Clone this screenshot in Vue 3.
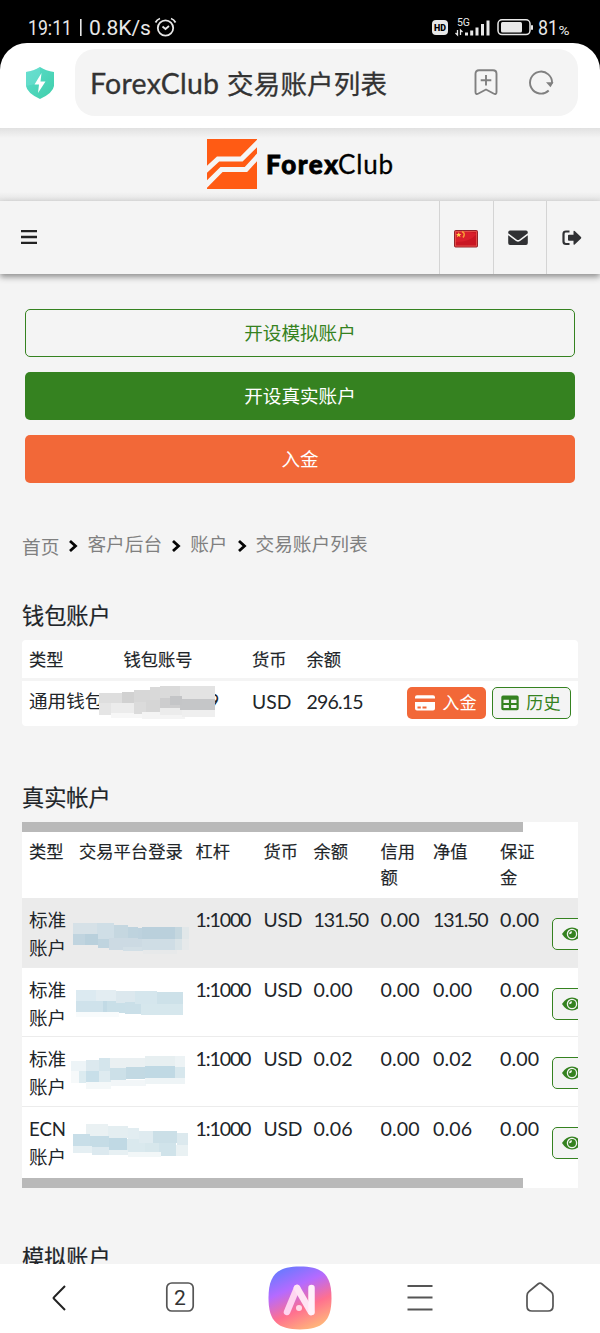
<script setup>
const actions = [
  { label: '开设模拟账户', kind: 'outline' },
  { label: '开设真实账户', kind: 'green' },
  { label: '入金', kind: 'orange' },
]
const crumbs = ['首页', '客户后台', '账户', '交易账户列表']
const heads = ['类型', '交易平台登录', '杠杆', '货币', '余额', '信用额', '净值', '保证金']
const walletMask = [
  [297, 158, 68, 32, '#dedede'], [365, 155, 38, 34, '#d1d1d1'], [297, 188, 34, 37, '#e5e5e5'],
  [331, 188, 72, 34, '#ececec'], [331, 218, 100, 14, '#f7f7f7'], [400, 150, 50, 38, '#d7d7d7'],
  [400, 186, 36, 34, '#dbdbdb'], [436, 178, 50, 38, '#d6d6d6'], [425, 215, 130, 22, '#f4f4f4'],
  [450, 141, 28, 38, '#d9d9d9'], [478, 137, 66, 38, '#dadada'], [478, 173, 66, 32, '#cdcdce'],
  [478, 203, 70, 22, '#ececec'], [540, 138, 105, 41, '#e3e3e3'], [540, 177, 105, 33, '#c5c6c8'],
  [545, 209, 98, 22, '#efefef'], [510, 168, 35, 26, '#c4c5c7'],
]
const rows = [
  {
    cells: ['标准账户', '', '1:1000', 'USD', '131.50', '0.00', '131.50', '0.00'],
    mask: [
      [220, 72, 72, 34, '#d6e1e7'], [292, 72, 50, 52, '#cfdee6'], [220, 106, 34, 32, '#c0d4df'],
      [254, 106, 40, 32, '#b9d0dc'], [294, 120, 34, 26, '#bfd4df'], [342, 79, 42, 39, '#c5d7e0'],
      [384, 85, 30, 35, '#bed3de'], [326, 116, 100, 36, '#ccdae3'], [414, 87, 12, 34, '#bdd2de'],
      [426, 85, 98, 36, '#bad0dc'], [524, 85, 22, 36, '#c5d7df'], [546, 85, 20, 36, '#e1e7e9'],
      [370, 145, 60, 12, '#d2dfe6'], [426, 121, 98, 31, '#cfdde5'], [524, 121, 22, 31, '#d9e3e7'],
      [546, 121, 20, 31, '#e6e9ea'], [430, 152, 100, 12, '#e7e9ea'],
    ],
  },
  {
    cells: ['标准账户', '', '1:1000', 'USD', '0.00', '0.00', '0.00', '0.00'],
    mask: [
      [228, 63, 60, 33, '#dceaf1'], [288, 64, 60, 33, '#e3edf2'], [228, 96, 80, 33, '#cfe2eb'],
      [308, 96, 14, 35, '#c2dae5'], [322, 96, 52, 36, '#c9dfe8'], [348, 66, 60, 35, '#dce8ee'],
      [374, 100, 50, 34, '#cadfe8'], [404, 67, 66, 37, '#d5e6ed'], [424, 104, 126, 34, '#d6e7ed'],
      [470, 70, 80, 34, '#cde1e9'], [228, 130, 130, 15, '#f8fbfc'],
    ],
  },
  {
    cells: ['标准账户', '', '1:1000', 'USD', '0.02', '0.00', '0.02', '0.00'],
    mask: [
      [214, 69, 44, 32, '#edf4f7'], [258, 65, 38, 35, '#dce9ef'], [296, 61, 38, 39, '#d4e5ec'],
      [236, 98, 22, 36, '#dcebf0'], [258, 98, 40, 35, '#c8dfe9'], [298, 98, 34, 33, '#deebf0'],
      [330, 60, 110, 34, '#eaf0f2'], [330, 90, 48, 36, '#cce0e8'], [378, 88, 60, 36, '#c2d9e3'],
      [436, 54, 88, 33, '#e7eff1'], [436, 84, 88, 36, '#c0d9e4'], [524, 53, 30, 34, '#edf3f5'],
      [524, 86, 30, 33, '#d7e7ed'], [258, 133, 76, 20, '#f4f8f9'], [332, 125, 105, 20, '#f2f6f8'],
      [436, 119, 118, 20, '#eef4f6'], [214, 100, 22, 34, '#f6f9fa'],
    ],
  },
  {
    cells: ['ECN账户', '', '1:1000', 'USD', '0.06', '0.00', '0.06', '0.00'],
    mask: [
      [258, 49, 66, 36, '#eaf1f3'], [324, 55, 60, 36, '#e4eef1'], [384, 60, 34, 36, '#e2edf1'],
      [220, 79, 50, 34, '#c8dee8'], [270, 84, 56, 34, '#c5dce6'], [326, 90, 54, 36, '#c0d9e4'],
      [380, 94, 54, 38, '#dae9ee'], [418, 68, 42, 38, '#dfebf0'], [460, 68, 70, 36, '#cbdfe7'],
      [530, 75, 34, 36, '#dce9ee'], [434, 104, 44, 33, '#d7e7ec'], [478, 104, 50, 39, '#d0e3ea'],
      [528, 110, 36, 35, '#e9f1f3'], [220, 113, 56, 22, '#e5eff3'], [276, 118, 52, 24, '#dce9ef'],
      [328, 126, 56, 14, '#e7f0f3'], [384, 132, 100, 14, '#f2f7f8'],
    ],
  },
]
</script>

<template>
  <div class="phone">
    <header class="status">
      <svg width="600" height="43" viewBox="0 0 600 43">
        <g fill="#e8e8e8">
          <text x="28" y="35" font-size="20.5" textLength="44" lengthAdjust="spacingAndGlyphs">19:11</text>
          <rect x="80" y="19" width="1.6" height="17" />
          <text x="89" y="35" font-size="20.5" textLength="62" lengthAdjust="spacingAndGlyphs">0.8K/s</text>
          <rect x="432" y="20" width="16" height="15" rx="4" />
          <text x="434" y="31" font-size="8.5" font-weight="900" fill="#000" textLength="12" lengthAdjust="spacingAndGlyphs">HD</text>
          <text x="457" y="26" font-size="10.5" textLength="13">5G</text>
          <path d="M465 35.500v-3h3v3zM470.200 35.500v-5h3v5zM475.500 35.500v-8h3v8zM481 35.500v-11.500h3v11.500zM486.500 35.500v-15h3v15z" />
          <path d="M457.500 30v5l-2-2M460.500 35v-5l2 2" fill="none" stroke="#e8e8e8" stroke-width="1.300" />
          <rect x="501" y="22" width="21" height="10.500" rx="1.500" />
          <rect x="531" y="25" width="2" height="5" rx="1" />
          <text x="538" y="35" font-size="20.500" textLength="20" lengthAdjust="spacingAndGlyphs">81</text>
          <text x="558.500" y="35" font-size="13" textLength="11" lengthAdjust="spacingAndGlyphs">%</text>
        </g>
        <g fill="none" stroke="#e8e8e8" stroke-width="1.800">
          <circle cx="165.500" cy="28" r="7.700" />
          <path d="M162.500 26.500l3 2.500 3.500-3M155.500 22.500q1.500-3 4.500-4M175.500 22.500q-1.500-3-4.500-4" />
          <rect x="498" y="19.800" width="32" height="14.800" rx="4" stroke-width="1.500" />
        </g>
      </svg>
    </header>

    <div class="browser-wrap">
      <div class="browser">
        <svg class="shield" width="30" height="34" viewBox="0 0 30 34">
          <defs>
            <linearGradient id="mint" x1="0" y1="0" x2="1" y2="1">
              <stop offset="0" stop-color="#5bdccb" /><stop offset="1" stop-color="#40cfaa" />
            </linearGradient>
          </defs>
          <path d="M15 1 Q21 5 29 6V20Q28 27 15 33Q2 27 1 20V6Q9 5 15 1Z" fill="url(#mint)" />
          <path d="M15 1Q9 5 1 6V20L15 17Z" fill="#78e3d6" opacity=".45" />
          <path d="M16.500 7L9.500 18.500H14L13 27L20.500 15.500H15.500Z" fill="#fff" />
        </svg>
        <div class="address">
          <svg class="title" width="310" height="44" viewBox="0 0 310 44">
            <text x="0" y="32.500" font-size="28.500" textLength="129">ForexClub</text>
            <text x="137" y="32.500" font-size="26.500" textLength="160">交易账户列表</text>
          </svg>
          <svg class="mark" width="24" height="27" viewBox="0 0 24 27">
            <path d="M5 1.200H19Q22.500 1.200 22.500 4.700V23Q22.500 26 19.500 24.500L12 20.500L4.500 24.500Q1.500 26 1.500 23V4.700Q1.500 1.200 5 1.200ZM12 6V16.500M6.700 11.200H17.300" />
          </svg>
          <svg class="reload" width="26" height="26" viewBox="0 0 26 26">
            <path d="M20.700 20.500A11 11 0 1 1 24 13.500" /><path d="M18 12.200H25.500L22.500 17.200Z" class="tip" />
          </svg>
        </div>
      </div>
    </div>

    <div class="brand">
      <svg width="190" height="52" viewBox="0 0 190 52">
        <defs><clipPath id="tile"><rect x="2" y="1" width="50" height="50" /></clipPath></defs>
        <g clip-path="url(#tile)">
          <rect x="2" y="1" width="50" height="50" fill="#ff5b14" />
          <path d="M-1 34L13 21H36.500L56 1.500M-1 49L16.500 31.500H41L56 15" fill="none" stroke="#f5f5f5" stroke-width="5.200" />
        </g>
        <text x="61" y="36" font-size="26" font-weight="900" textLength="72" stroke="#000" stroke-width=".8">Forex</text>
        <text x="133" y="36" font-size="26" textLength="55" stroke="#000" stroke-width=".3">Club</text>
      </svg>
    </div>

    <nav class="toolbar">
      <svg class="burger" width="18" height="16" viewBox="0 0 18 16"><path d="M1 2.200H17M1 8H17M1 13.800H17" /></svg>
      <div class="tool">
        <svg width="24" height="18" viewBox="0 0 24 18">
          <rect x=".5" y=".5" width="23" height="16.500" rx="1" fill="#d91f2b" stroke="#91252b" />
          <path d="M12 1h11v15H1V12Q14 13 23 4" fill="#b90d1b" opacity=".5" />
          <path d="M1.500 1.500H22.500V16H1.500Z" fill="none" stroke="#e75a51" stroke-width=".8" />
          <path d="M4.700 2.200l.8 1.800h2l-1.600 1.300.6 2-1.800-1.200-1.800 1.200.6-2L2 4h2z" fill="#ffd04b" />
          <path d="M8 1.500q4 2 1 6" fill="none" stroke="#f79a33" stroke-width="1.500" />
        </svg>
      </div>
      <div class="tool">
        <svg width="20" height="16" viewBox="0 0 20 16">
          <path d="M2 .5H18Q19.800.5 19.800 2.500V3.300L11.500 9.500Q10 10.600 8.500 9.500L.2 3.300V2.500Q.2.500 2 .5ZM.2 5.200L8 11Q10 12.300 12 11L19.800 5.200V13Q19.800 15 18 15H2Q.2 15 .2 13Z" fill="#303134" />
        </svg>
      </div>
      <div class="tool">
        <svg width="20" height="16" viewBox="0 0 20 16">
          <path d="M7.500 1.500H4Q1.500 1.500 1.500 4V11.500Q1.500 14 4 14H7.500" fill="none" stroke="#303134" stroke-width="2.200" />
          <path d="M6 5.500Q6 4.700 7 4.700H11.500V1.500Q11.500.3 12.700 1.100L19 7Q19.600 7.700 19 8.500L12.700 14.500Q11.500 15.300 11.500 14V10.800H7Q6 10.800 6 10Z" fill="#303134" />
        </svg>
      </div>
    </nav>

    <main>
      <div class="actions">
        <button v-for="a in actions" :key="a.label" :class="a.kind">{{ a.label }}</button>
      </div>

      <div class="crumbs">
        <template v-for="(c, i) in crumbs" :key="c">
          <svg v-if="i" width="10" height="14" viewBox="0 0 10 14"><path d="M2 2L7.500 7L2 12" /></svg>
          <span>{{ c }}</span>
        </template>
      </div>

      <h2>钱包账户</h2>
      <section class="wallet">
        <div class="wgrid whead"><b>类型</b><b>钱包账号</b><b>货币</b><b>余额</b></div>
        <div class="wgrid wrow">
          <span>通用钱包</span><span class="number-end">9</span><span class="usd">USD</span><span class="sum">296.15</span>
          <div class="buttons">
            <button class="pay">
              <svg width="20" height="16" viewBox="0 0 20 16">
                <path d="M2 .3H18Q20 .3 20 2.300V3.500H0V2.300Q0 .3 2 .3ZM0 7H20V13.500Q20 15.500 18 15.500H2Q0 15.500 0 13.500Z" fill="#fff" />
                <path d="M2.500 12.500H5.800M7.500 12.500H11.500" stroke="#f26838" stroke-width="1.800" />
              </svg>
              入金
            </button>
            <button class="history">
              <svg width="18" height="16" viewBox="0 0 18 16">
                <path d="M2 .5H16Q17.700.5 17.700 2.200V13.500Q17.700 15.200 16 15.200H2Q.3 15.200.3 13.500V2.200Q.3.500 2 .5ZM2.500 4.800V8H7.900V4.800ZM10.100 4.800V8H15.500V4.800ZM2.500 10V13H7.900V10ZM10.100 10V13H15.500V10Z" fill="#358220" fill-rule="evenodd" />
              </svg>
              历史
            </button>
          </div>
          <svg class="wmask" width="130" height="40" viewBox="290 125 390 120" shape-rendering="crispEdges">
            <rect v-for="(m, i) in walletMask" :key="i" :x="m[0]" :y="m[1]" :width="m[2]" :height="m[3]" :fill="m[4]" />
          </svg>
        </div>
      </section>

      <h2 class="second">真实帐户</h2>
      <section class="live">
        <div class="bar"></div>
        <div class="lgrid lhead"><b v-for="h in heads" :key="h">{{ h }}</b></div>
        <div v-for="(r, i) in rows" :key="i" class="lgrid lrow">
          <span v-for="(c, j) in r.cells" :key="j" :class="['c' + j, { long: c.length === 6 }]">{{ c }}</span>
          <button class="view">
            <svg width="20" height="14" viewBox="0 0 20 14">
              <path d="M0 7Q4 .5 10 .5T20 7Q16 13.500 10 13.500T0 7Z" fill="#358220" />
              <circle cx="10" cy="7" r="4.600" fill="#358220" stroke="#f4f4f4" stroke-width="1.300" />
              <path d="M7.200 7.200A2.800 2.800 0 0 1 10 4.200Q10 7 7.200 7.200Z" fill="#f4f4f4" />
            </svg>
          </button>
          <svg class="lmask" width="120" height="42" viewBox="210 45 360 126" shape-rendering="crispEdges">
            <rect v-for="(m, k) in r.mask" :key="k" :x="m[0]" :y="m[1]" :width="m[2]" :height="m[3]" :fill="m[4]" />
          </svg>
        </div>
        <div class="bar"></div>
      </section>

      <h2 class="third">模拟账户</h2>
    </main>

    <footer>
      <div><svg width="30" height="36" viewBox="0 0 30 36"><path d="M20 6L9 17.200Q8 18 9 18.800L20 30" stroke="#222" stroke-width="2" /></svg></div>
      <div>
        <svg width="30" height="36" viewBox="0 0 30 36">
          <rect x="1.800" y="3" width="26.400" height="28" rx="5" />
          <text x="15" y="24.500" font-size="21" text-anchor="middle">2</text>
        </svg>
      </div>
      <div>
        <svg width="64" height="64" viewBox="0 0 64 64">
          <defs>
            <linearGradient id="ai" x1=".2" y1="0" x2=".65" y2="1">
              <stop offset="0" stop-color="#637bff" /><stop offset=".35" stop-color="#b56aff" />
              <stop offset=".68" stop-color="#ff708f" /><stop offset="1" stop-color="#ffb47b" />
            </linearGradient>
          </defs>
          <path d="M32 .5C54 .5 63.500 8 63.500 32S54 63 32 63.500C10 63 .5 56 .5 32S10 .5 32 .5Z" fill="url(#ai)" stroke="none" />
          <path d="M19 46L29 22" stroke="#ffd5f0" stroke-width="6.500" stroke-linecap="round" />
          <path d="M29 22L43 46" stroke="#ffe4f4" stroke-width="6.500" stroke-linecap="round" />
          <path d="M43.500 22V46" stroke="#fff1fa" stroke-width="6.500" stroke-linecap="round" />
          <circle cx="31" cy="42" r="3" fill="#ffd9e8" stroke="none" />
        </svg>
      </div>
      <div><svg width="30" height="36" viewBox="0 0 30 36"><path d="M2.500 6H27.500M2.500 17.500H27.500M2.500 29.500H27.500" stroke-width="1.900" /></svg></div>
      <div><svg width="30" height="36" viewBox="0 0 30 36"><path d="M13 4Q15 2.300 17 4L26 11.500Q28 13 28 16V26Q28 31 23 31H7Q2 31 2 26V16Q2 13 4 11.500Z" /></svg></div>
    </footer>
  </div>
</template>

<style>
body { background: #f4f4f4; }
</style>

<style scoped>
.phone {
  width: 600px; height: 1333px; overflow: hidden; display: flex; flex-direction: column;
  background: #f4f4f4; color: #212529; font-family: Lato, "Noto Sans CJK SC", sans-serif;
}
.phone * { box-sizing: border-box; }
svg { display: block; flex: none; }
button { font: inherit; margin: 0; padding: 0; border: 0; }
.status { height: 43px; flex: none; background: #000; font-family: Roboto, sans-serif; }
.browser-wrap { height: 85px; flex: none; background: #000; }
.browser { height: 85px; border-radius: 27px 27px 0 0; background: #fff; display: flex; align-items: flex-start; }
.shield { margin: 23px 0 0 25px; }
.address { width: 503px; height: 67px; margin: 6px 0 0 20px; background: #f4f4f4; border-radius: 20px; display: flex; align-items: center; }
.title { margin-left: 15px; fill: #333; stroke: #333; stroke-width: .3px; font-family: Lato, "Noto Sans CJK SC", sans-serif; }
.mark { margin-left: 74px; }
.reload { margin-left: 30px; }
.mark path, .reload path { fill: none; stroke: #808080; stroke-width: 1.900; }
.reload .tip { fill: #808080; stroke: none; }
.brand { height: 73px; flex: none; display: flex; justify-content: center; padding-top: 10px; background: linear-gradient(#e1e1e1, #f4f4f4 10px, #f4f4f4 64px, #e3e3e3); }
.brand svg { font-family: Lato, sans-serif; }
.toolbar { height: 73px; flex: none; display: flex; align-items: center; box-shadow: 0 3px 6px #8f8f8f; }
.burger { margin: 0 auto 1px 20px; }
.burger path { stroke: #222; stroke-width: 2.300; }
.tool { width: 53.700px; height: 73px; display: flex; align-items: center; justify-content: center; border-left: 1px solid #d4d4d4; }
.tool:nth-child(2) svg { margin-top: 3px; }
.tool:nth-child(n + 3) svg { margin-right: 4px; }
main { flex: 1; min-height: 0; overflow: hidden; padding: 35px 22px 0; }
.actions { display: grid; gap: 15px; padding: 0 3px; }
.actions button { height: 48px; border-radius: 5px; font-size: 18.600px; color: #fff; padding-bottom: 4px; }
.actions .outline { color: #358220; background: transparent; border: 1px solid #358220; }
.actions .green { background: #358220; }
.actions .orange { background: #f26838; }
.crumbs { height: 28px; margin-top: 47px; display: flex; align-items: center; font-size: 18.700px; color: #808080; }
.crumbs svg { margin: 4px 9px 0 9px; }
.crumbs path { fill: none; stroke: #050505; stroke-width: 2.800; }
.crumbs span { margin-top: -3px; }
.crumbs span:first-child { margin-top: 3px; }
h2 { margin: 43px 0 0; height: 30px; font-size: 22.200px; line-height: 30px; font-weight: 400; -webkit-text-stroke: .2px #212529; }
.wallet { margin-top: 9px; height: 86px; background: #fff; border-radius: 4px; }
.wgrid { display: grid; grid-template-columns: 94.500px 128.500px 54.500px 100px 1fr; padding-left: 7px; }
.whead { height: 41px; border-bottom: 3px solid #f4f4f4; line-height: 40px; }
b { font-size: 17.300px; font-weight: 400; -webkit-text-stroke: .15px #212529; }
.wrow { position: relative; height: 45px; font-size: 18.600px; line-height: 41px; }
.number-end { padding-left: 85px; }
.usd { font-size: 19.300px; }
.sum { font-size: 19.500px; letter-spacing: -.8px; }
.buttons { display: flex; gap: 6px; padding-top: 6px; }
.buttons button { height: 32px; border-radius: 5px; display: flex; align-items: center; justify-content: center; gap: 7px; font-size: 17.200px; line-height: 30px; }
.pay { width: 79px; background: #f26838; color: #fff; }
.history { width: 79px; background: #f4f4f4; color: #358220; border: 1px solid #358220 !important; }
.wmask { position: absolute; left: 75px; top: 1px; }
.second { margin-top: 57px; }
.live { margin-top: 9px; height: 366px; background: #fff; overflow: hidden; }
.bar { width: 501px; height: 10px; background: #b9b9b9; }
.lgrid { display: grid; grid-template-columns: 50px 116.500px 68px 50px 67px 52.500px 67px 51.500px 80px; padding-left: 7px; }
.lhead { height: 66px; padding-top: 7px; line-height: 26px; }
.lhead b:nth-child(6), .lhead b:nth-child(8) { width: 36px; }
.lrow { height: 69.600px; padding-top: 8px; line-height: 28px; font-size: 19.600px; position: relative; border-bottom: 1px solid #ececec; }
.lrow:nth-child(3) { background: #ebebeb; }
.lrow:nth-child(6) { border: 0; height: 71.200px; }
.lrow span { letter-spacing: .15px; }
.lrow .c0 { font-size: 18.600px; width: 40px; letter-spacing: 0; }
.lrow .c3 { font-size: 19.300px; letter-spacing: -.2px; }
.lrow .long { letter-spacing: -1.150px; }
.view { width: 60px; height: 32px; margin: 12px 0 0 0; padding-left: 9px; background: #f4f4f4; border: 1px solid #358220; border-radius: 5px; }
.lmask { position: absolute; left: 48px; top: 16px; }
.third { margin-top: 55px; }
footer { height: 69px; flex: none; background: #fff; display: grid; grid-template-columns: repeat(5, 120px); }
footer div { display: flex; align-items: center; justify-content: center; padding-bottom: 2px; }
footer svg { fill: none; stroke: #555; stroke-width: 1.700; font-family: Roboto, sans-serif; }
footer text { fill: #333; stroke: none; }
</style>
